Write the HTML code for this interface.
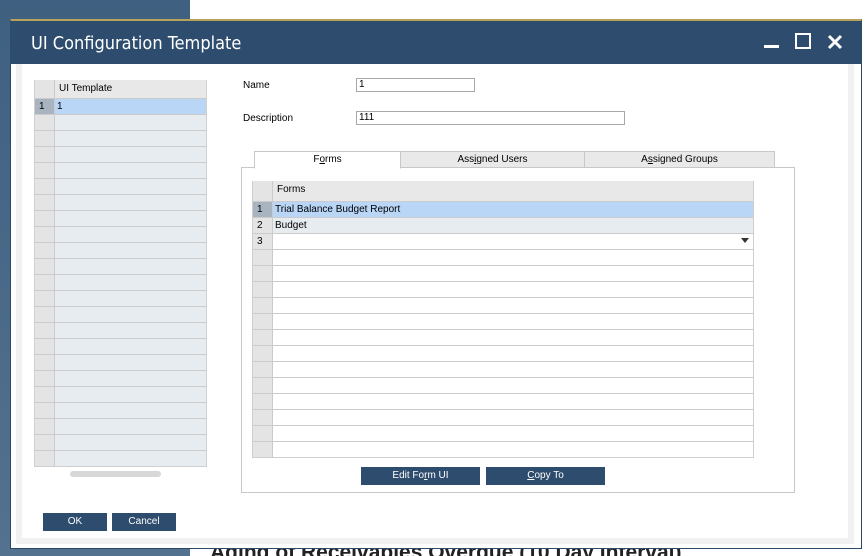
<!DOCTYPE html>
<html><head><meta charset="utf-8"><style>
*{box-sizing:border-box;margin:0;padding:0}
html,body{width:866px;height:556px;overflow:hidden}
body{position:relative;background:#fff;font-family:"Liberation Sans",Arial,sans-serif;font-size:10px;color:#000}
.abs{position:absolute}
.lbg{left:0;top:0;width:190px;height:556px;background:linear-gradient(#3f6080,#53728f)}
.dlg{left:10px;top:19px;width:852px;height:530px;background:#fff;border:1px solid #2b4a6a;border-top:2px solid #b8a15a}
.title{left:10px;top:21px;width:852px;height:43px;background:#2e4d6e;color:#fff;font-family:"DejaVu Sans Condensed","Liberation Sans Narrow",sans-serif;font-size:18px;line-height:45px;padding-left:21px}
.pan{left:16px;top:64px;width:838px;height:480px;background:#fff;border:6px solid #f1f1f1;border-top:0}
.grid{border:1px solid #cfcfcf}
.hd{background:#e8e8e8}
.row{position:absolute;left:0;right:0;height:16px;border-top:1px solid #cbcbcb}
.ix{position:absolute;left:0;top:0;bottom:0;width:20px;background:#e4e4e4;border-right:1px solid #cbcbcb;padding-left:4px;line-height:15px}
.tx{position:absolute;left:22px;line-height:15px}
.inp{border:1px solid #a8a8a8;height:14px;padding-left:2px;line-height:12px;background:#fff}
.tab{top:151px;height:17px;border:1px solid #c8c8c8;background:#e9e9e9;text-align:center;line-height:16px}
.btn{background:#2e4d6e;color:#fff;text-align:center;line-height:18px;height:18px}
</style></head><body>
<div class="abs lbg"></div>
<div class="abs" style="left:210px;top:541px;font:bold 21px 'Liberation Sans',sans-serif;color:#222;line-height:24px">Aging of Receivables Overdue (10 Day Interval)</div>
<div class="abs dlg"></div>
<div class="abs title">UI Configuration Template</div>
<div class="abs" style="left:764px;top:45px;width:15px;height:3px;background:#fff"></div>
<div class="abs" style="left:795px;top:33px;width:16px;height:16px;border:2px solid #fff"></div>
<svg class="abs" style="left:827px;top:34px" width="16" height="16" viewBox="0 0 16 16"><path d="M2 2L14 14M14 2L2 14" stroke="#fff" stroke-width="3"/></svg>
<div class="abs pan"></div>

<div class="abs grid" style="left:34px;top:80px;width:173px;height:387px;background:#e7ecf1">
 <div class="row hd" style="top:-1px;height:19px;border-top:0"><div class="ix" style="background:#e4e4e4"></div><div class="tx" style="line-height:17px;left:24px">UI Template</div></div>
 <div class="row" style="top:17px;background:#b9d6f7"><div class="ix" style="background:#a8b4c0">1</div><div class="tx">1</div></div>
 <div id="lr"></div>
</div>
<div class="abs" style="left:70px;top:471px;width:91px;height:6px;border-radius:3px;background:#d8d8d8"></div>

<div class="abs" style="left:243px;top:80px">Name</div>
<div class="abs inp" style="left:356px;top:78px;width:119px">1</div>
<div class="abs" style="left:243px;top:113px">Description</div>
<div class="abs inp" style="left:356px;top:111px;width:269px">111</div>

<div class="abs" style="left:241px;top:167px;width:554px;height:326px;border:1px solid #c8c8c8"></div>
<div class="abs tab" style="left:254px;width:147px;background:#fff;border-bottom-color:#fff;height:18px">F<u>o</u>rms</div>
<div class="abs tab" style="left:400px;width:185px">Ass<u>i</u>gned Users</div>
<div class="abs tab" style="left:584px;width:191px">A<u>s</u>signed Groups</div>

<div class="abs grid" style="left:252px;top:181px;width:502px;height:277px;background:#fff">
 <div class="row hd" style="top:-1px;height:21px;border-top:0"><div class="ix"></div><div class="tx" style="line-height:17px;left:24px">Forms</div></div>
 <div class="row" style="top:19px;background:#b9d6f7"><div class="ix" style="background:#a8b4c0">1</div><div class="tx">Trial Balance Budget Report</div></div>
 <div class="row" style="top:35px;background:#e7ecf1"><div class="ix">2</div><div class="tx">Budget</div></div>
 <div class="row" style="top:51px"><div class="ix">3</div><div class="abs" style="right:4px;top:4px;width:0;height:0;border-left:4px solid transparent;border-right:4px solid transparent;border-top:5px solid #333"></div></div>
 <div id="rr"></div>
</div>

<div class="abs btn" style="left:361px;top:467px;width:119px">Edit Fo<u>r</u>m UI</div>
<div class="abs btn" style="left:486px;top:467px;width:119px"><u>C</u>opy To</div>
<div class="abs btn" style="left:43px;top:513px;width:64px">OK</div>
<div class="abs btn" style="left:112px;top:513px;width:64px">Cancel</div>
<script>
var h='';for(var i=2;i<24;i++)h+='<div class="row" style="top:'+(17+(i-1)*16)+'px"><div class="ix"></div></div>';
document.getElementById('lr').outerHTML=h;
h='';for(var i=4;i<=16;i++)h+='<div class="row" style="top:'+(19+(i-1)*16)+'px"><div class="ix"></div></div>';
document.getElementById('rr').outerHTML=h;
</script>
</body></html>
